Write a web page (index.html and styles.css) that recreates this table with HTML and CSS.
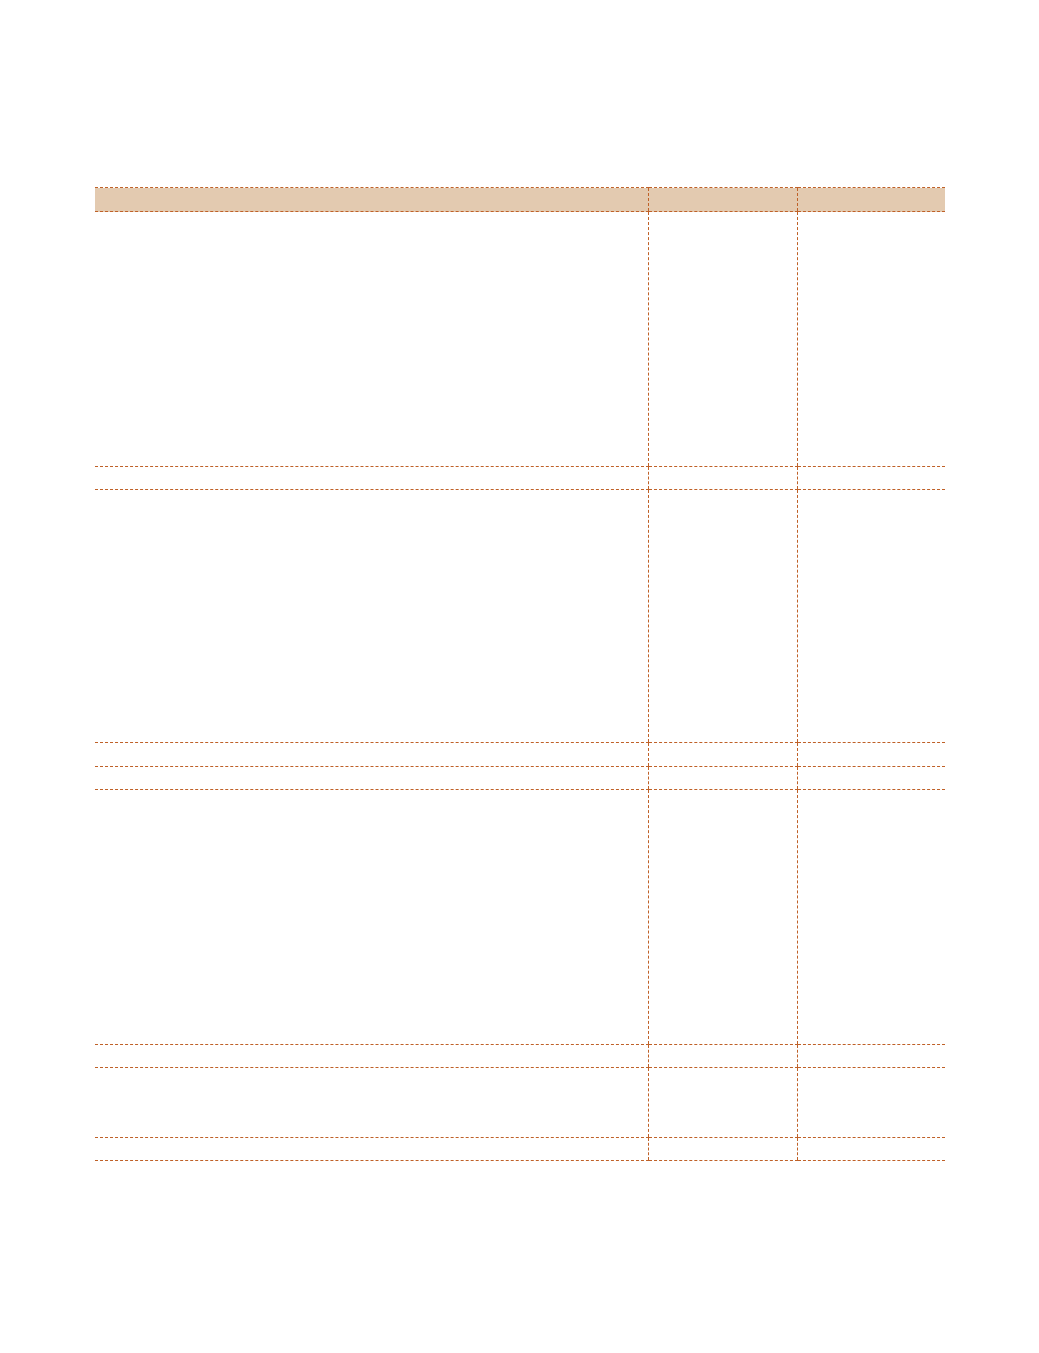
FILE: index.html
```html
<!DOCTYPE html>
<html>
<head>
<meta charset="utf-8">
<link rel="stylesheet" href="styles.css">
</head>
<body>
<div class="page">
<table class="ledger">
<colgroup><col class="c1"><col class="c2"><col class="c3"></colgroup>
<thead>
<tr class="head"><th></th><th></th><th></th></tr>
</thead>
<tbody>
<tr class="tall"><td></td><td></td><td></td></tr>
<tr class="line"><td></td><td></td><td></td></tr>
<tr class="tall2"><td></td><td></td><td></td></tr>
<tr class="line-wide"><td></td><td></td><td></td></tr>
<tr class="line"><td></td><td></td><td></td></tr>
<tr class="tall"><td></td><td></td><td></td></tr>
<tr class="line"><td></td><td></td><td></td></tr>
<tr class="mid"><td></td><td></td><td></td></tr>
<tr class="line"><td></td><td></td><td></td></tr>
</tbody>
</table>
</div>
</body>
</html>
```

FILE: styles.css
```css
html, body {
  margin: 0;
  padding: 0;
  background: #ffffff;
  font-family: "Liberation Sans", Arial, sans-serif;
}
.page {
  padding: 187px 94px 0 95px;
}
.ledger {
  width: 850px;
  border-collapse: collapse;
  table-layout: fixed;
}
.c1 { width: 553px; }
.c2 { width: 149px; }
.c3 { width: 148px; }
.ledger th, .ledger td {
  padding: 0;
  border-bottom: 1px dashed #bf6128;
}
.ledger th + th, .ledger td + td {
  border-left: 1px dashed #bf6128;
}
.head th {
  background: #e3cab0;
  border-top: 1px dashed #bf6128;
  height: 23px;
}
.tall td { height: 254px; }
.tall2 td { height: 252px; }
.line td { height: 22px; }
.line-wide td { height: 23px; }
.mid td { height: 69px; }
```
